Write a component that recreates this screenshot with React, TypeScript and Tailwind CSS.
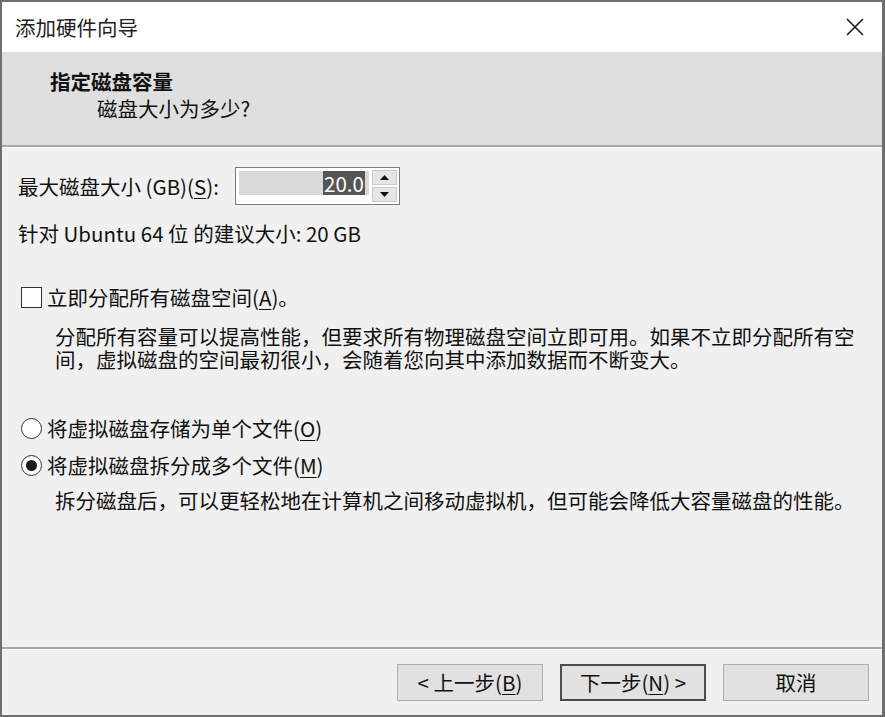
import type { ReactNode } from 'react'

function Key({ children }: { children: ReactNode }) {
  return <span className="underline underline-offset-[3px] decoration-1">{children}</span>
}

function Button({ children, focused = false }: { children: ReactNode; focused?: boolean }) {
  return (
    <button
      className={`w-[146px] h-[37px] flex items-center justify-center bg-[#e1e1e1] text-[20.5px] text-[#111] ${
        focused ? 'border-2 border-[#4d4d4d]' : 'border border-[#adadad]'
      }`}
    >
      {children}
    </button>
  )
}

export default function App() {
  return (
    <div className="w-[885px] h-[717px] flex flex-col bg-[#f0f0f0] border-t-2 border-l-2 border-b-2 border-r-[3px] border-[#6e6e6e] font-['Noto_Sans_CJK_SC','Noto_Sans',sans-serif] text-[20.5px] text-[#111] overflow-hidden">
      {/* Title bar */}
      <div className="h-[50px] shrink-0 bg-white flex items-center justify-between pl-[13px] pr-[16px]">
        <span className="leading-none text-[#222]">添加硬件向导</span>
        <svg width="18" height="18" viewBox="0 0 18 18" className="mr-[2px]">
          <path d="M1 1 L17 17 M17 1 L1 17" stroke="#1a1a1a" strokeWidth="1.6" fill="none" />
        </svg>
      </div>

      {/* Header */}
      <div className="h-[95px] shrink-0 bg-[#dfdfdf] border-b-2 border-[#a6a6a6] pt-[17px]">
        <div className="pl-[48px] font-bold leading-[24px]">指定磁盘容量</div>
        <div className="pl-[95px] mt-[3px] leading-[24px]">磁盘大小为多少?</div>
      </div>
      <div className="h-px shrink-0 bg-white" />

      {/* Body */}
      <div className="flex-1 flex flex-col pl-[16px]">
        <div className="mt-[19px] h-[38px] flex items-center">
          <span className="whitespace-nowrap">
            最大磁盘大小 (GB)(<Key>S</Key>):
          </span>
          <div className="ml-[16px] w-[165px] h-[38px] flex border border-[#7a7a7a] bg-white">
            <div className="flex-1 p-[3px]">
              <div className="h-[24px] bg-[#d9d9d9] flex justify-end items-center pr-[4px]">
                <span className="bg-[#555] text-white leading-[24px] px-[1px]">20.0</span>
              </div>
            </div>
            <div className="w-[27px] flex flex-col gap-[2px] py-[2px] pr-[2px]">
              <div className="flex-1 bg-[#e6e6e6] border border-[#c8c8c8] flex items-center justify-center">
                <svg width="9" height="5" viewBox="0 0 9 5">
                  <path d="M0 5 L4.5 0 L9 5 Z" fill="#111" />
                </svg>
              </div>
              <div className="flex-1 bg-[#e6e6e6] border border-[#c8c8c8] flex items-center justify-center">
                <svg width="9" height="5" viewBox="0 0 9 5">
                  <path d="M0 0 L9 0 L4.5 5 Z" fill="#111" />
                </svg>
              </div>
            </div>
          </div>
        </div>

        <div className="mt-[16px] leading-[24px] whitespace-nowrap">针对 Ubuntu 64 位 的建议大小: 20 GB</div>

        <div className="mt-[40px] h-[24px] flex items-center">
          <span className="w-[21px] h-[21px] ml-[3px] border border-[#333] bg-white shrink-0" />
          <span className="ml-[5px] whitespace-nowrap">
            立即分配所有磁盘空间(<Key>A</Key>)。
          </span>
        </div>

        <div className="mt-[16px] ml-[37px] leading-[23px] whitespace-nowrap">
          <div>分配所有容量可以提高性能，但要求所有物理磁盘空间立即可用。如果不立即分配所有空</div>
          <div>间，虚拟磁盘的空间最初很小，会随着您向其中添加数据而不断变大。</div>
        </div>

        <div className="mt-[45px] h-[24px] flex items-center">
          <span className="w-[21px] h-[21px] ml-[3px] rounded-full border border-[#333] bg-white shrink-0" />
          <span className="ml-[5px] whitespace-nowrap">
            将虚拟磁盘存储为单个文件(<Key>O</Key>)
          </span>
        </div>

        <div className="mt-[13px] h-[24px] flex items-center">
          <span className="w-[21px] h-[21px] ml-[3px] rounded-full border border-[#333] bg-white shrink-0 flex items-center justify-center">
            <span className="w-[11px] h-[11px] rounded-full bg-[#1a1a1a]" />
          </span>
          <span className="ml-[5px] whitespace-nowrap">
            将虚拟磁盘拆分成多个文件(<Key>M</Key>)
          </span>
        </div>

        <div className="mt-[12px] ml-[37px] leading-[23px] whitespace-nowrap">
          拆分磁盘后，可以更轻松地在计算机之间移动虚拟机，但可能会降低大容量磁盘的性能。
        </div>
      </div>

      {/* Footer */}
      <div className="h-[2px] shrink-0 bg-[#a6a6a6]" />
      <div className="h-px shrink-0 bg-white" />
      <div className="h-[65px] shrink-0 flex justify-end items-start gap-[17px] pt-[14px] pr-[13px]">
        <Button>
          &lt; 上一步(<Key>B</Key>)
        </Button>
        <Button focused>
          下一步(<Key>N</Key>) &gt;
        </Button>
        <Button>取消</Button>
      </div>
    </div>
  )
}
